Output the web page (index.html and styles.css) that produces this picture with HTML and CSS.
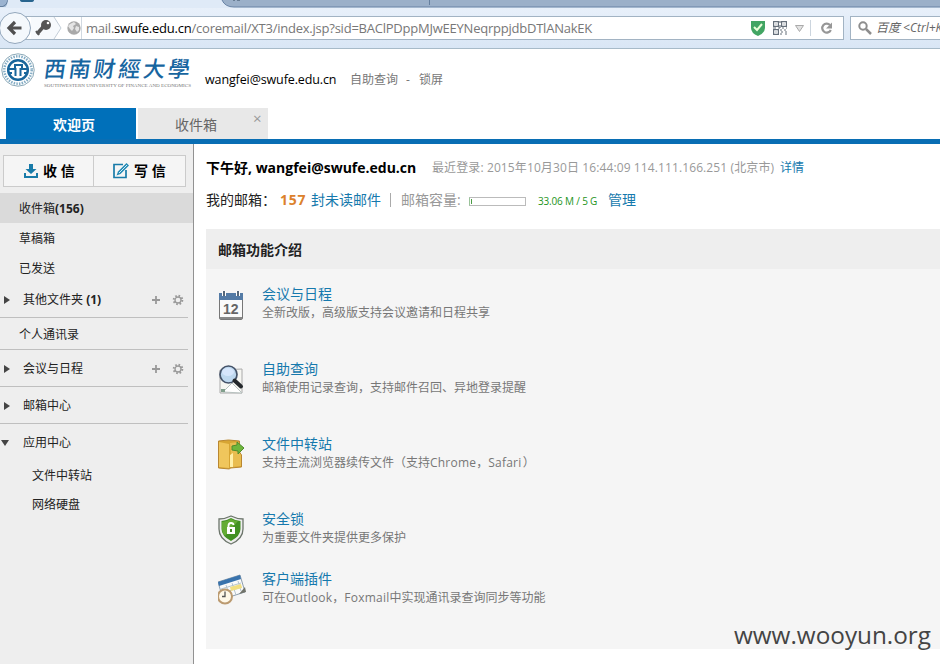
FILE: index.html
```
<!DOCTYPE html>
<html lang="zh-CN">
<head>
<meta charset="utf-8">
<title>西南财经大学邮箱</title>
<link rel="stylesheet" href="styles.css">
</head>
<body>
<div class="tabstrip">
  <svg width="940" height="8" viewBox="0 0 940 8"><path d="M0 0H22Q20 6 14 7H0Z" fill="#9bb3d0"/><path d="M0 6.500H3Q7 5 8 0" fill="none" stroke="#65809f"/><path d="M8 0h14v8H4Q8 5 8 0" fill="#dfeaf7"/><path d="M222 0Q225 7 234 7H940V0Z" fill="#9bb0c9"/><path d="M222 0Q225 7 234 7H940" fill="none" stroke="#6883a5"/><path d="M429.500 0v5" stroke="#657f9e"/><path d="M20 0h14q0 2-3 2h-8q-3 0-3-2" fill="#28658f"/><path d="M233 0h2v1h-2zm4 0h3v1h-3z" fill="#687d94"/></svg>
</div>
<div class="toolbar">
  <div class="nav">
    <svg width="82" height="40" viewBox="0 8 82 40"><path d="M14 16.500H82V39.500H14" fill="#fff" stroke="#a2b3c3"/><path d="M31 17H54l7 11-7 11H31Z" fill="#f7fafd"/><path d="M54 17l7 11-7 11" fill="none" stroke="#c4ced8"/><circle cx="15" cy="28" r="15.500" fill="#f4f8fc" stroke="#93a7bc"/><path d="M21.500 28H10.500M15 22l-6 6 6 6" fill="none" stroke="#505050" stroke-width="3.200"/><circle cx="46" cy="25" r="5" fill="#555"/><path d="M43 27l-6 7" stroke="#555" stroke-width="3.500"/><path d="M36 31l3 4" stroke="#555" stroke-width="2"/><circle cx="48" cy="23" r="1.300" fill="#fff"/><circle cx="74" cy="28" r="6.700" fill="#a9a9a9"/><path d="M70 24l4-2 2 2-3 2 1 2-2 3-2-2-2-3zM76 26l3 1v3l-2 2-2-3z" fill="#e4e4e4"/></svg>
  </div>
  <div class="url"><span class="address">mail.<b>swufe.edu.cn</b>/coremail/XT3/index.jsp?sid=BAClPDppMJwEEYNeqrppjdbDTlANakEK</span>
    <svg width="94" height="22" viewBox="749 17 94 22"><path d="M751 21h14v7q0 5-7 8-7-3-7-8z" fill="#42a563"/><path d="M754 27l3 3 5-6" fill="none" stroke="#e9ffd9" stroke-width="2"/><g fill="none" stroke="#66707b" stroke-width="1.200"><path d="M773.600 21.600h4.800v4.800h-4.800zM781.600 21.600h4.800v4.800h-4.800zM773.600 29.600h4.800v4.800h-4.800z"/><path d="M780 21v2m0 2v3m-7 0h3m2 0h2m2 0h2m2 0h1m-7 2h2m2 0h2m-5 2h2m2 0h2m-7 2h2m3 0h2M775.500 24h1M783.500 24h1M775.500 32h1"/></g><path d="M795.500 25.500h8l-4 6z" fill="#e2e2e2" stroke="#aaa"/><path d="M810.500 20v16" stroke="#ccd5de"/><path d="M830 25a4.500 4.500 0 1 0 .8 5" fill="none" stroke="#979797" stroke-width="2.200"/><path d="M832 22.500v6h-6z" fill="#979797"/></svg>
  </div>
  <div class="search"><svg width="20" height="20" viewBox="0 0 20 20"><circle cx="10" cy="8" r="3.700" fill="none" stroke="#8d8d8d" stroke-width="2"/><path d="M13 11l5 5" stroke="#8d8d8d" stroke-width="2.500"/></svg><i>百度 &lt;Ctrl+K&gt;</i></div>
</div>
<header class="header">
  <svg class="logo" width="200" height="44" viewBox="0 49 200 44"><g fill="none" stroke="#3979a2"><circle cx="18" cy="70" r="16.200" stroke="#8ba9b8"/><circle cx="18" cy="70" r="13.700" stroke="#84acc4" stroke-width="2.500" stroke-dasharray="1.500 1.200"/><circle cx="18" cy="70" r="9.800" stroke="#19669b" stroke-width="2.500"/><path d="M8 69h7v-4h7v4h6M15.500 68v8M20.500 68v8M9 73h3M24 73h4" stroke="#19669b" stroke-width="2"/></g><g class="wordmark"><text transform="translate(43 77) skewX(-8)" textLength="146" lengthAdjust="spacing">西南财經大學</text></g><text class="motto" x="44" y="86.500" textLength="147" lengthAdjust="spacingAndGlyphs">SOUTHWESTERN UNIVERSITY OF FINANCE AND ECONOMICS</text></svg>
  <span class="account">wangfei@swufe.edu.cn</span><span class="quick">自助查询<em>-</em>锁屏</span>
</header>
<div class="tabs"><div class="tab active">欢迎页</div><div class="tab">收件箱<span class="close">×</span></div></div>
<div class="layout">
<aside>
  <div class="actions">
    <div class="action receive"><svg width="16" height="16" viewBox="0 0 16 16"><path d="M6 1h4v5h3.500L8 11 2.500 6H6zM1 10h2v3h10v-3h2v5H1z" fill="#187ba9"/></svg>收 信</div>
    <div class="action write"><svg width="18" height="16" viewBox="0 0 18 16"><path d="M11 1.500H2v13h12V7" fill="none" stroke="#187ba9" stroke-width="1.700"/><path d="M4.500 12.500l1.500-4L14.500 0 17 2.500 8.500 11z" fill="#258bb6"/><path d="M7 10l8-8" stroke="#cfebf5"/></svg>写 信</div>
  </div>
  <nav>
    <div class="row chosen">收件箱<b>(156)</b></div>
    <div class="row">草稿箱</div>
    <div class="row sent">已发送</div>
    <div class="row group others"><i class="arrow"></i>其他文件夹&nbsp;<b>(1)</b><span class="tools"><svg width="34" height="14" viewBox="0 0 34 14"><path d="M2 7h8M6 3v8" stroke="#999" stroke-width="1.800"/><circle cx="28" cy="7" r="3" fill="none" stroke="#999" stroke-width="1.300"/><circle cx="28" cy="7" r="4.300" fill="none" stroke="#999" stroke-width="2" stroke-dasharray="1.600 1.777"/></svg></span></div>
    <div class="row contacts">个人通讯录</div>
    <div class="row group"><i class="arrow"></i>会议与日程<span class="tools"><svg width="34" height="14" viewBox="0 0 34 14"><path d="M2 7h8M6 3v8" stroke="#999" stroke-width="1.800"/><circle cx="28" cy="7" r="3" fill="none" stroke="#999" stroke-width="1.300"/><circle cx="28" cy="7" r="4.300" fill="none" stroke="#999" stroke-width="2" stroke-dasharray="1.600 1.777"/></svg></span></div>
    <div class="row group"><i class="arrow"></i>邮箱中心</div>
    <div class="row group apps"><i class="arrow down"></i>应用中心</div>
    <div class="row child">文件中转站</div>
    <div class="row child">网络硬盘</div>
  </nav>
</aside>
<main>
  <div class="hello"><b>下午好, <span>wangfei@swufe.edu.cn</span></b><span class="last">最近登录: 2015年10月30日 16:44:09 114.111.166.251 (北京市)</span><a>详情</a></div>
  <div class="status">我的邮箱：<b>157</b><a>封未读邮件</a><span class="bar"></span><span class="capacity">邮箱容量:</span><span class="meter"></span><span class="quota">33.06 M / 5 G</span><a>管理</a></div>
  <section>
    <h2>邮箱功能介绍</h2>
    <div class="features">
      <article><svg width="28" height="34" viewBox="0 0 28 34"><rect x="1.500" y="5.500" width="23" height="26" rx="1.500" fill="#fafafa" stroke="#777"/><path d="M1 5h24v7H1z" fill="#547ba6"/><path d="M2 30h22" stroke="#888" stroke-width="2"/><path d="M6 3v5M20 3v5" stroke="#fff" stroke-width="4"/><path d="M6 3v5M20 3v5" stroke="#56687b" stroke-width="2"/><text class="date" x="5" y="26">12</text></svg><div><h3>会议与日程</h3><p>全新改版，高级版支持会议邀请和日程共享</p></div></article>
      <article><svg width="28" height="34" viewBox="0 0 28 34"><path d="M2 7l22-1v24H2z" fill="#f6f6f2" stroke="#aaa"/><path d="M5 29l9-9 10 10z" fill="#fff" stroke="#b8c2c0"/><path d="M3 26h4v3H3z" fill="#819f8d"/><circle cx="10.500" cy="11.500" r="8.500" fill="#bed8ef" stroke="#445268" stroke-width="1.700"/><ellipse cx="10" cy="9" rx="6" ry="4" fill="#dceaff" opacity=".8"/><path d="M16.500 17.500l6.500 6" stroke="#24282c" stroke-width="4" stroke-linecap="round"/></svg><div><h3>自助查询</h3><p>邮箱使用记录查询，支持邮件召回、异地登录提醒</p></div></article>
      <article><svg width="28" height="34" viewBox="0 0 28 34"><path d="M0.500 3l10-1 11 1v11l2 3v12l-11 1-1 1-11-1z" fill="#d7a533" stroke="#b98731"/><path d="M1 4l10 2v24l-10-1z" fill="#f0c65c"/><path d="M12 5l9-1v10l2 3v11l-9 1z" fill="#e9bd50"/><path d="M12 17l3-2v14h-3z" fill="#fff0aa"/><path d="M14 8l5-1V4l7 6-6 6v-3l-6-1z" fill="#6fb63c" stroke="#4e8d2d"/></svg><div><h3>文件中转站</h3><p>支持主流浏览器续传文件（支持<span class="latin">Chrome</span>，<span class="latin">Safari</span>&#8202;）</p></div></article>
      <article class="short"><svg width="28" height="34" viewBox="0 0 28 34"><path d="M13 3Q7 6 1 6v10q0 10 12 15 12-5 12-15V6Q19 6 13 3z" fill="#eee" stroke="#6c756b" stroke-width="1.300"/><path d="M13 5Q8 8 3.500 8v8q0 7 9.500 12 9.500-5 9.500-12V8Q18 8 13 5z" fill="#429022"/><path d="M13 6Q8 9 4 9v7q0 4 3 7L20 8Q16 8 13 6z" fill="#74b83c" opacity=".7"/><path d="M9 14h8v7H9z" fill="#fff"/><path d="M10.500 14v-1q0-3 2.500-3t2.500 2" stroke="#fff" stroke-width="1.800" fill="none"/><path d="M13 16v3" stroke="#498b28" stroke-width="2"/></svg><div><h3>安全锁</h3><p>为重要文件夹提供更多保护</p></div></article>
      <article><svg width="30" height="34" viewBox="0 0 30 34"><path d="M0 9L22 2l5 17-22 7z" fill="#fafafa" stroke="#8c9dac"/><path d="M0 9L22 2l1 4L1 13z" fill="#3973ad"/><path d="M3 16l20-6M4 20l20-6M8 12l4 12M14 10l4 12M20 8l3 10" stroke="#b5c4ce"/><path d="M12 14l11-3 1 4-11 3z" fill="#f2df80"/><path d="M21 21l6-7 1 5z" fill="#71736a"/><circle cx="7" cy="23.500" r="7" fill="#fff8e8" stroke="#bb9a70" stroke-width="2"/><path d="M7 18.500v5H4" stroke="#555" fill="none" stroke-width="1.300"/></svg><div><h3>客户端插件</h3><p>可在<span class="latin">Outlook</span>，<span class="latin">Foxmail</span>中实现通讯录查询同步等功能</p></div></article>
    </div>
    <div class="watermark">www.wooyun.org</div>
  </section>
</main>
</div>
</body>
</html>
```
FILE: styles.css
```
*{box-sizing:border-box}
body{margin:0;width:940px;height:664px;overflow:hidden;background:#fff;color:#222;font:12px/18px "Open Sans","Noto Sans CJK SC",sans-serif;white-space:nowrap}
svg{display:block;flex:none}
a{color:#1679ad}
i,em{font-style:normal}
.tabstrip{height:8px;background:#dfeaf7}
.toolbar{height:41px;display:flex;background:linear-gradient(#e8f0fa,#d9e6f5);border-bottom:1px solid #a7bac8;overflow:hidden}
.nav{width:82px;flex:none}
.url{width:762px;flex:none;height:24px;margin-top:8px;display:flex;align-items:center;justify-content:space-between;background:#fff;border:solid #a2b3c3;border-width:1px 1px 1px 0;color:#777;font-size:13px}
.url b{font-weight:400;color:#000}
.address{padding-left:4px;letter-spacing:-.23px}
.search{width:100px;flex:none;height:24px;margin:8px 0 0 6px;background:#fff;border:1px solid #a2b3c3;display:flex;align-items:center;font-size:12px;color:#666;padding-left:2px}
.search i{font-style:italic;padding-left:3px}
.header{height:59px;display:flex;color:#777}
.account{width:145px;padding-left:5px;padding-top:22px;color:#000;font-size:12.500px;letter-spacing:-.12px}
.quick{padding:22px 0 0 5px}
.quick em{padding:0 9px 0 8px}
.wordmark text{font:500 22px "Noto Sans CJK SC",sans-serif;fill:#17659f}
.motto{font:5px "Liberation Serif",serif;fill:#777}
.tabs{height:36px;display:flex;gap:2px;padding-left:6px;border-bottom:5px solid #096eb4}
.tab{width:130px;height:31px;background:#e8e8e8;color:#666;font-size:14px;line-height:33px;padding-left:37px;display:flex}
.active{background:#0070ba;color:#fff;font-weight:700;padding-left:47px}
.close{font-size:15px;line-height:21px;color:#999;margin-left:36px}
.layout{display:flex;height:520px}
aside{width:194px;background:#eee;border-right:1px solid #929292;padding-top:11px}
.actions{height:32px;width:183px;margin:0 0 6px 3px;border:1px solid #cbcbcb;display:flex;background:#f5f5f5}
.action{display:flex;align-items:center;font-size:14px;font-weight:700;color:#000}
.receive{width:90px;border-right:1px solid #ccc;padding-left:19px;gap:4px}
.write{padding-left:18px;gap:4px}
.row{height:30px;display:flex;align-items:center;padding:2px 0 0 19px}
.chosen{background:#dadada}
.sent{height:29px}
.group{height:37px;width:188px;padding-left:4px;border-bottom:1px solid #bfbfbf}
.others{height:36px;padding-top:0}
.contacts{height:32px;width:188px;border-bottom:1px solid #bfbfbf}
.arrow{width:19px;flex:none}
.arrow:before{content:"";display:block;width:0;border:4px solid transparent;border-left:6px solid #444;border-right:0}
.down:before{margin-left:-3px;border:4px solid transparent;border-top:6px solid #444;border-bottom:0}
.tools{margin-left:auto;padding-right:4px}
.apps{height:36px;border-bottom:0}
.child{padding-left:32px}
.row.child{height:29.500px}
main{flex:1;padding:10px 0 0 12px}
.hello{height:27px;display:flex;align-items:center;color:#999}
.hello>b{width:226px;color:#000;font-size:14px}
.last{width:348px;letter-spacing:.11px}
.status{height:38px;display:flex;align-items:center;font-size:14px}
.status>b{width:31px;margin-left:4px;color:#dc812c;letter-spacing:.7px}
.bar{width:1px;height:14px;background:#aaa;margin:0 10px 0 9px}
.capacity{width:68px;color:#999}
.meter{width:57px;height:9px;margin-top:2px;border:1px solid #bbb;border-left-color:#9ac39a;background:linear-gradient(#4c9c45,#4c9c45) 1px 1px/1px 5px no-repeat}
.quota{width:70px;margin-left:12px;margin-top:2px;color:#249421;font-size:10px;letter-spacing:-.18px}
section{height:420px;margin-top:10px;background:#f5f5f5;position:relative}
h2{height:40px;margin:0;padding-left:12px;background:#eee;font-size:14px;line-height:41px}
.features{padding:16px 0 0 12px}
article{height:75px;display:flex}
article>svg{margin-top:3px}
article>div{padding-left:16px}
article>svg[width="30"]+div{padding-left:14px}
.short{height:60px}
h3{height:18px;margin:0;color:#1679ad;font-size:14px;line-height:18px;font-weight:400}
p{margin:1px 0 0;color:#777}
.latin{letter-spacing:.22px}
.date{font:700 14px "Liberation Sans",sans-serif;fill:#666}
.watermark{position:absolute;right:9px;bottom:-1px;color:#444;font:24.300px/31px "Open Sans",sans-serif}
```
